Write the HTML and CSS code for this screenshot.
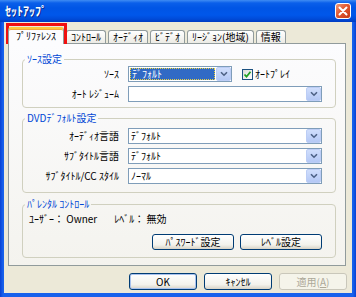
FILE: index.html
```html
<!DOCTYPE html>
<html lang="ja">
<head>
    <meta charset="UTF-8">
    <title>ｾｯﾄｱｯﾌﾟ</title>
    <link rel="stylesheet" href="styles.css">
</head>
<body>
    <div class="window">
        <!-- Title bar -->
        <div class="titlebar">
            <span class="title">ｾｯﾄｱｯﾌﾟ</span>
            <span class="close">
                <svg width="10" height="10" viewBox="0 0 10 10"><path d="M1.5 1.5L8.5 8.5M8.5 1.5L1.5 8.5" stroke="#fff" stroke-width="2" stroke-linecap="round"/></svg>
            </span>
        </div>

        <div class="client">
            <!-- Tabs -->
            <div class="tabs">
                <div class="tab active">ﾌﾟﾘﾌｧﾚﾝｽ</div>
                <div class="tab">ｺﾝﾄﾛｰﾙ</div>
                <div class="tab">ｵｰﾃﾞｨｵ</div>
                <div class="tab">ﾋﾞﾃﾞｵ</div>
                <div class="tab">ﾘｰｼﾞｮﾝ(地域)</div>
                <div class="tab">情報</div>
            </div>

            <div class="panel">
                <fieldset class="group group-source">
                    <legend>ｿｰｽ設定</legend>
                    <div class="form-grid">
                        <span class="label">ｿｰｽ</span>
                        <div class="field-row">
                            <div class="combo combo-short focused">
                                <span class="value">ﾃﾞﾌｫﾙﾄ</span>
                                <span class="arrow"><svg width="8" height="6" viewBox="0 0 8 6"><path d="M1 1.2l3 3 3-3" fill="none" stroke="#4D6185" stroke-width="1.6"/></svg></span>
                            </div>
                            <span class="check">
                                <span class="box"><svg width="9" height="9" viewBox="0 0 9 9"><path d="M1.5 4.5l2 2.2 4-5" fill="none" stroke="#21A121" stroke-width="1.8"/></svg></span>
                                ｵｰﾄﾌﾟﾚｲ
                            </span>
                        </div>
                        <span class="label">ｵｰﾄ ﾚｼﾞｭｰﾑ</span>
                        <div class="combo">
                            <span class="value"></span>
                            <span class="arrow"><svg width="8" height="6" viewBox="0 0 8 6"><path d="M1 1.2l3 3 3-3" fill="none" stroke="#4D6185" stroke-width="1.6"/></svg></span>
                        </div>
                    </div>
                </fieldset>

                <fieldset class="group group-dvd">
                    <legend>DVDﾃﾞﾌｫﾙﾄ設定</legend>
                    <div class="form-grid">
                        <span class="label">ｵｰﾃﾞｨｵ言語</span>
                        <div class="combo">
                            <span class="value">ﾃﾞﾌｫﾙﾄ</span>
                            <span class="arrow"><svg width="8" height="6" viewBox="0 0 8 6"><path d="M1 1.2l3 3 3-3" fill="none" stroke="#4D6185" stroke-width="1.6"/></svg></span>
                        </div>
                        <span class="label">ｻﾌﾞﾀｲﾄﾙ言語</span>
                        <div class="combo">
                            <span class="value">ﾃﾞﾌｫﾙﾄ</span>
                            <span class="arrow"><svg width="8" height="6" viewBox="0 0 8 6"><path d="M1 1.2l3 3 3-3" fill="none" stroke="#4D6185" stroke-width="1.6"/></svg></span>
                        </div>
                        <span class="label">ｻﾌﾞﾀｲﾄﾙ/CC ｽﾀｲﾙ</span>
                        <div class="combo">
                            <span class="value">ﾉｰﾏﾙ</span>
                            <span class="arrow"><svg width="8" height="6" viewBox="0 0 8 6"><path d="M1 1.2l3 3 3-3" fill="none" stroke="#4D6185" stroke-width="1.6"/></svg></span>
                        </div>
                    </div>
                </fieldset>

                <fieldset class="group group-parental">
                    <legend>ﾊﾟﾚﾝﾀﾙ ｺﾝﾄﾛｰﾙ</legend>
                    <div class="info">
                        <span>ﾕｰｻﾞｰ： Owner</span>
                        <span>ﾚﾍﾞﾙ： 無効</span>
                    </div>
                    <div class="group-buttons">
                        <button class="btn btn-wide">ﾊﾟｽﾜｰﾄﾞ設定</button>
                        <button class="btn btn-wide">ﾚﾍﾞﾙ設定</button>
                    </div>
                </fieldset>
            </div>

            <!-- Dialog buttons -->
            <div class="dialog-buttons">
                <button class="btn default">OK</button>
                <button class="btn">ｷｬﾝｾﾙ</button>
                <button class="btn" disabled>適用(<u>A</u>)</button>
            </div>
        </div>

        <!-- Annotation box around the selected tab -->
        <div class="highlight"></div>
    </div>
</body>
</html>
```

FILE: styles.css
```css
/* General */
* {
    box-sizing: border-box;
}

body {
    margin: 0;
    font-family: "Noto Sans CJK JP", "Liberation Sans", sans-serif;
    font-size: 10px;
    color: #000;
    background: #fff;
}

/* Window frame */
.window {
    position: relative;
    width: 356px;
    height: 297px;
    display: flex;
    flex-direction: column;
    background: linear-gradient(to right, #0841D4, #1761EC 3px, #1761EC 353px, #0841D4);
}

.titlebar {
    height: 22px;
    flex-shrink: 0;
    display: flex;
    align-items: center;
    justify-content: space-between;
    padding: 0 5px 0 5px;
    background: linear-gradient(to bottom, #3F8CF3 0, #0A5FEA 3px, #0055E5 8px, #0057EA 15px, #004BD8 19px, #003CC2 22px);
}

.title {
    color: #fff;
    font-weight: bold;
    font-size: 12px;
    line-height: 14px;
    text-shadow: 1px 1px 0 #0A2A8C;
}

.close {
    width: 16px;
    height: 16px;
    display: flex;
    align-items: center;
    justify-content: center;
    border: 1px solid #fff;
    border-radius: 3px;
    background: linear-gradient(135deg, #F09A7C, #E2572F 45%, #C23A17);
}

.client {
    flex: 1;
    display: flex;
    flex-direction: column;
    margin: 0 4px 4px 4px;
    background: #ECE9D8;
}

/* Tabs */
.tabs {
    height: 21px;
    flex-shrink: 0;
    display: flex;
    align-items: flex-end;
    gap: 2px;
    padding-left: 4px;
}

.tab {
    height: 13px;
    line-height: 12px;
    padding: 0 4px;
    border: 1px solid #919B9C;
    border-bottom: none;
    border-radius: 3px 3px 0 0;
    background: linear-gradient(to bottom, #FFFFFF, #ECEBE5);
    white-space: nowrap;
}

.tab.active {
    position: relative;
    z-index: 1;
    height: 17px;
    margin-bottom: -1px;
    padding: 0 7px;
    line-height: 14px;
    border-top: 2px solid #FFC83C;
    box-shadow: inset 0 1px 0 #F4A93A;
    background: #FCFCFE;
}

/* Tab panel */
.panel {
    height: 223px;
    flex-shrink: 0;
    margin: 0 6px 0 4px;
    padding: 9px 9px 8px 13px;
    border: 1px solid #919B9C;
    background: linear-gradient(to bottom, #FCFCFE, #F4F3EE);
    display: flex;
    flex-direction: column;
}

/* Group boxes */
.group {
    margin: 0;
    min-width: 0;
    border: 1px solid #D0D0BF;
    border-radius: 4px;
    padding: 1px 13px 5px 0;
}

.group legend {
    margin-left: 2px;
    padding: 0 2px;
    line-height: 12px;
    color: #0046D5;
}

.group-dvd {
    margin-top: 4px;
    padding-top: 4px;
    padding-bottom: 8px;
}

.group-parental {
    margin-top: 5px;
    padding-top: 3px;
    padding-bottom: 7px;
}

.form-grid {
    display: grid;
    grid-template-columns: 96px 1fr;
    column-gap: 9px;
    row-gap: 4px;
    align-items: center;
}

.label {
    text-align: right;
    line-height: 12px;
    white-space: nowrap;
}

.field-row {
    display: flex;
    align-items: center;
}

/* Combo boxes */
.combo {
    height: 16px;
    display: flex;
    align-items: center;
    border: 1px solid #7F9DB9;
    background: #fff;
}

.combo-short {
    width: 104px;
}

.combo .value {
    flex: 1;
    padding-left: 2px;
    line-height: 12px;
    white-space: nowrap;
}

.combo.focused .value {
    height: 12px;
    margin: 0 1px;
    color: #fff;
    background: #316AC5;
    outline: 1px dotted #E8D040;
    outline-offset: -1px;
}

.combo .arrow {
    width: 15px;
    height: 14px;
    display: flex;
    align-items: center;
    justify-content: center;
    border: 1px solid #BCCDF5;
    border-radius: 2px;
    background: linear-gradient(to bottom, #D0DEFC, #B4C8F5);
}

/* Checkbox */
.check {
    display: flex;
    align-items: center;
    gap: 2px;
    margin-left: 10px;
    line-height: 12px;
}

.box {
    width: 11px;
    height: 11px;
    display: flex;
    align-items: center;
    justify-content: center;
    border: 1px solid #1C5180;
    background: linear-gradient(135deg, #DCDCD7, #FFFFFF);
}

/* Parental control */
.info {
    display: flex;
    gap: 17px;
    padding-left: 6px;
    line-height: 12px;
}

.group-buttons {
    display: flex;
    justify-content: flex-end;
    gap: 6px;
    margin-top: 9px;
}

/* Buttons */
.btn {
    width: 68px;
    height: 17px;
    padding: 0;
    font-family: inherit;
    font-size: 10px;
    line-height: 12px;
    color: #000;
    border: 1px solid #003C74;
    border-radius: 3px;
    background: linear-gradient(to bottom, #FFFFFF, #F3F2EC 70%, #D8D3C6);
}

.btn-wide {
    width: 82px;
    height: 16px;
}

.btn.default {
    box-shadow: inset 0 0 0 1px #A9C2EE;
}

.btn:disabled {
    color: #ACA899;
    border-color: #C9C7BA;
    background: #F5F4EA;
}

.dialog-buttons {
    display: flex;
    justify-content: flex-end;
    gap: 7px;
    padding: 7px 5px 0 0;
}

/* Red annotation frame */
.highlight {
    position: absolute;
    left: 6px;
    top: 23px;
    width: 61px;
    height: 21px;
    border: 3px solid #F01010;
    pointer-events: none;
}
```
